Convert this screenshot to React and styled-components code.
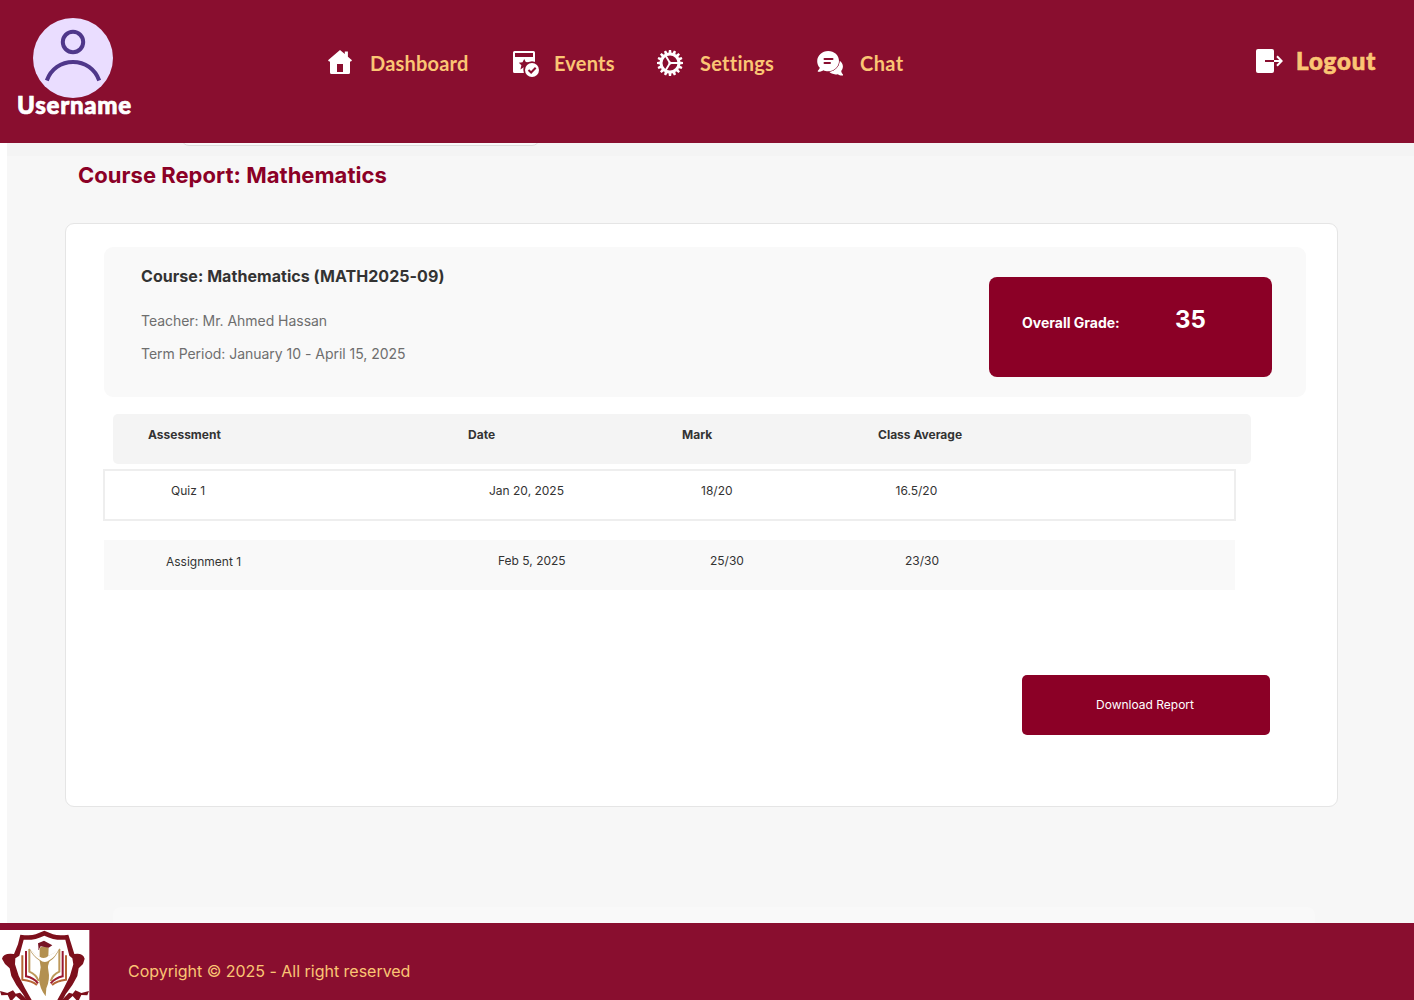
import React from "react";
import styled, { createGlobalStyle } from "styled-components";

const GlobalStyle = createGlobalStyle`
  * { box-sizing: border-box; }
  body { margin: 0; background: #fff; font-family: Inter, "Liberation Sans", sans-serif; }
`;

const Page = styled.div`
  display: flex;
  flex-direction: column;
  width: 1414px;
  height: 1000px;
  overflow: hidden;
`;

const Header = styled.header`
  display: flex;
  flex: none;
  height: 143px;
  background: #890e2f;
  font-family: Lato, "Open Sans", sans-serif;
`;

const Profile = styled.div`
  display: flex;
  flex-direction: column;
  width: 328px;
  padding: 18px 0 0 17px;
`;

const AvatarIcon = styled.svg`
  width: 80px;
  height: 80px;
  margin-left: 16px;
`;

const Username = styled.div`
  margin-top: -7px;
  font-size: 24px;
  line-height: 28px;
  font-weight: 900;
  letter-spacing: 0.75px;
  -webkit-text-stroke: 0.7px #fff;
  color: #fff;
`;

const Nav = styled.nav`
  display: flex;
  flex: 1;
  padding-top: 48px;
`;

const NavItem = styled.a`
  display: flex;
  align-items: center;
  flex: none;
  width: ${(p) => p.$width}px;
  height: 30px;
  gap: ${(p) => p.$gap}px;
  font-size: 20px;
  line-height: 30px;
  font-weight: 700;
  letter-spacing: ${(p) => p.$spacing}px;
  font-variant-ligatures: none;
  color: #fbc574;
`;

const Icon = styled.svg`
  flex: none;
  width: ${(p) => p.$w}px;
  height: ${(p) => p.$h}px;
`;

const Logout = styled.a`
  display: flex;
  align-items: center;
  width: 158px;
  height: 30px;
  margin-top: 46px;
  gap: 13px;
  font-size: 24px;
  line-height: 30px;
  font-weight: 900;
  letter-spacing: 0.9px;
  -webkit-text-stroke: 0.7px #fbc574;
  color: #fbc574;
`;

const Main = styled.main`
  display: flex;
  flex-direction: column;
  height: 780px;
  margin-left: 7px;
  background: #f7f7f7;
`;

const TopStrip = styled.div`
  display: flex;
  align-items: flex-start;
  flex: none;
  height: 13px;
  padding-left: 174px;
  overflow: hidden;
  background: #f4f4f4;
`;

const FieldEdge = styled.div`
  width: 359px;
  height: 20px;
  margin-top: -17px;
  border: 1px solid #dcdcdc;
  border-radius: 8px;
  background: #f9f9f9;
`;

const PageTitle = styled.h1`
  margin: 4px 0 0 71px;
  font-size: 22px;
  line-height: 31px;
  font-weight: 700;
  letter-spacing: 0.03px;
  color: #8b0026;
`;

const Card = styled.section`
  display: flex;
  flex-direction: column;
  flex: none;
  width: 1273px;
  height: 584px;
  margin: 32px 0 0 58px;
  padding: 23px 0 0 38px;
  border: 1px solid #e5e5e5;
  border-radius: 9px;
  background: #fff;
`;

const Summary = styled.div`
  display: flex;
  justify-content: space-between;
  flex: none;
  width: 1202px;
  height: 150px;
  padding: 0 34px 0 37px;
  border-radius: 9px;
  background: #f9f9f9;
`;

const CourseInfo = styled.div`
  display: flex;
  flex-direction: column;
  padding-top: 17px;
`;

const CourseName = styled.h2`
  margin: 0 0 21px;
  font-size: 16px;
  line-height: 24px;
  font-weight: 700;
  letter-spacing: 0.05px;
  color: #333;
`;

const CourseDetail = styled.div`
  height: 33px;
  font-size: 14px;
  line-height: 24px;
  letter-spacing: -0.03px;
  color: #6e6e6e;
`;

const Grade = styled.div`
  display: flex;
  width: 283px;
  height: 100px;
  margin-top: 30px;
  padding: 28px 0 0 33px;
  border-radius: 8px;
  background: #8b0026;
  color: #fff;
  font-weight: 700;
`;

const GradeLabel = styled.div`
  width: 153px;
  padding-top: 3px;
  font-size: 14px;
  line-height: 30px;
`;

const GradeValue = styled.div`
  font-size: 24px;
  line-height: 30px;
`;

const TableHead = styled.div`
  display: grid;
  grid-template-columns: 320px 214px 196px 1fr;
  flex: none;
  width: 1138px;
  height: 50px;
  margin: 17px 0 0 9px;
  padding: 11px 0 0 35px;
  border-radius: 5px;
  background: #f4f4f4;
  font-size: 12px;
  line-height: 20px;
  font-weight: 700;
  color: #333;
`;

const TableRow = styled.div`
  display: grid;
  grid-template-columns: ${(p) => p.$columns};
  flex: none;
  width: ${(p) => (p.$outlined ? 1133 : 1131)}px;
  height: ${(p) => (p.$outlined ? 52 : 50)}px;
  margin: ${(p) => (p.$outlined ? "5px 0 0 -1px" : "19px 0 0")};
  padding: ${(p) => (p.$outlined ? 10 : 11)}px 0 0 ${(p) => p.$inset}px;
  border: ${(p) => (p.$outlined ? "2px solid #eee" : "0")};
  background: ${(p) => (p.$outlined ? "#fff" : "#f9f9f9")};
  font-size: 12px;
  line-height: 20px;
  color: #333;
`;

const Cell = styled.div`
  padding-top: ${(p) => p.$drop || 0}px;
`;

const DownloadButton = styled.button`
  flex: none;
  width: 247.5px;
  height: 60px;
  margin: 85px 0 0 918px;
  padding: 0 1.5px 0 0;
  border: 0;
  border-radius: 5px;
  background: #8b0026;
  color: #fff;
  font: 400 12px/20px Inter, sans-serif;
`;

const NextPanel = styled.div`
  flex: none;
  width: 1202px;
  height: 16px;
  margin: auto 0 0 106px;
  border-radius: 8px 8px 0 0;
  background: #f9f9f9;
`;

const Footer = styled.footer`
  display: flex;
  flex: none;
  height: 77px;
  padding-top: 7px;
  background: #890e2f;
`;

const Copyright = styled.div`
  margin: 29px 0 0 38px;
  font-size: 16px;
  line-height: 24px;
  letter-spacing: -0.02px;
  color: #fbc574;
`;

const HomeIcon = () => (
  <Icon $w={24} $h={26} viewBox="0 1 24 26">
    <path fill="#fff" d="M12 1 16.8 5.1V2.4h3.1v5.4L24 11.3l-1 1.3h-1V23.5q0 1.500-1.500 1.500h-17Q2 25 2 23.500V12.600H1L0 11.300zM9 15v8h6v-8z" fillRule="evenodd" />
  </Icon>
);

const EventsIcon = () => (
  <Icon $w={27} $h={28} viewBox="0 1 27 28">
    <path fill="#fff" fillRule="evenodd" d="M1.500 3h19Q22 3 22 4.500V25H1.500Q0 25 0 23.500V4.500Q0 3 1.500 3zM2 5v4h18V5z" />
    <path fill="#890e2f" d="m11.200 11 1.600 3.100 3.800.4-2.800 2.500.8 3.800-3.400-1.800-3.800 2.500 1-4.200-2.600-2.600 3.700-.5z" />
    <circle cx="19" cy="22" r="8.700" fill="#890e2f" />
    <circle cx="19" cy="22" r="7" fill="#fff" />
    <path fill="none" stroke="#890e2f" strokeWidth="2" d="m15.500 22 2.600 2.500 4.600-4.800" />
  </Icon>
);

const SettingsIcon = () => (
  <Icon $w={26} $h={26} viewBox="-13 -13 26 26">
    <circle r="9" fill="none" stroke="#fff" strokeWidth="3" />
    {Array.from({ length: 16 }, (_, i) => (
      <path key={i} fill="#fff" d="M-1.600-9.500-1.100-13h2.200l.5 3.500z" transform={`rotate(${i * 22.5})`} />
    ))}
    <path fill="none" stroke="#fff" strokeWidth="1.900" d="M0 0h8M0 0l-4.500-7.500M0 0l-4.500 7.500" />
    <circle r="1.600" fill="#fff" />
  </Icon>
);

const ChatIcon = () => (
  <Icon $w={26} $h={26} viewBox="0 0 26 26">
    <path fill="#fff" d="M22.500 10.800C25 12.300 26.300 14.800 25.800 17.500c-.2 1.500-.9 2.700-1.600 3.500.2 1.500.9 2.700 1.800 3.600v.9c-2.300.2-4-.4-5.200-1.300-3.700.7-7-.4-8.800-2.600 6-.6 10.400-4.800 10.500-10.800z" />
    <path fill="#fff" stroke="#890e2f" strokeWidth="1" paintOrder="stroke" d="M11.200 1c6 0 10.800 4.300 10.800 10s-4.800 10.300-10.800 10.300c-2 0-3.500-.3-4.900-1C4.600 21.500 2.800 22 .8 21.700v-1c1-.7 1.800-1.800 2-2.900C1.100 16 .2 13.800.2 11.200.2 5.500 5.200 1 11.200 1z" />
    <path stroke="#890e2f" strokeWidth="2" strokeLinecap="round" d="M7.500 9h8M7.500 13h5.500" />
  </Icon>
);

const LogoutIcon = () => (
  <Icon $w={27} $h={24} viewBox="0 0 27 24">
    <path fill="#fff" d="M2 0h14q2 0 2 2v20q0 2-2 2H2q-2 0-2-2V2q0-2 2-2z" />
    <path stroke="#890e2f" strokeWidth="2" d="M9 12h9" />
    <path fill="none" stroke="#fff" strokeWidth="2" d="M18 12h7.500M21 7.300l4.700 4.700-4.700 4.700" />
  </Icon>
);

const SchoolLogo = () => (
  <Icon $w={90} $h={70} viewBox="0 45 270 210">
    <path fill="#fff" d="M0 45h268v210H0z" />
    <g fill="#7d101c">
      <path
        fillRule="evenodd"
        d="M133 47 159 58Q177 63 205 59L214 88 223 117Q249 113 254 131L249 147 236 160 232 183Q219 211 197 238L188 255H172Q194 216 210 182L220 148 217 130 208 122 196 74Q164 77 133 62Q102 77 71 74L58 122 46 130 45 148 56 182Q73 218 95 255H79L69 238Q47 211 34 183L29 160 15 147 6 131Q10 113 42 117L54 88 61 59Q91 63 107 58z"
      />
      <path d="M0 228 22 234 39 226 47 236 60 233 82 255H62L48 243 37 255H30L23 240 4 241zM267 228 244 234 226 226 218 236 207 233 186 255H205L218 243 229 255H237L244 240 262 241z" />
    </g>
    <g fill="none" strokeWidth="6">
      <path stroke="#b56535" d="M67 121v73q30 3 44 16M198 121v73q-28 3-42 16" />
      <path stroke="#9b1930" d="M78 108v76q24 5 36 21M188 108v76q-22 5-36 21" />
      <path stroke="#bd995b" d="M88 102v68q20 8 28 28M178 102v68q-19 8-26 28" />
    </g>
    <path fill="#b39050" d="M87 99Q104 120 119 126L119 98Q132 91 146 98L145 123Q164 116 180 99Q165 131 149 139Q142 151 145 166Q151 194 139 220L137 244Q118 218 117 191L122 157 119 137Q98 125 87 99z" />
    <path fill="#fff" d="M89 100Q103 119 119 125Q133 134 146 122Q164 115 178 100Q165 128 149 135Q134 147 119 134Q100 124 89 100z" />
    <path fill="#771423" d="M114 85 132 77 157 91 146 98 122 94 118 101z" />
    <path fill="none" stroke="#771423" strokeWidth="2" d="M116 85v20" />
  </Icon>
);

const navItems = [
  { label: "Dashboard", icon: HomeIcon, width: 185, gap: 18, spacing: 0.2 },
  { label: "Events", icon: EventsIcon, width: 144, gap: 14, spacing: 0.2 },
  { label: "Settings", icon: SettingsIcon, width: 160, gap: 17, spacing: 0.25 },
  { label: "Chat", icon: ChatIcon, width: 120, gap: 17, spacing: 0.4 },
];

const rows = [
  { outlined: true, inset: 66, columns: "318px 212px 194.5px 1fr", drop: 0, cells: ["Quiz 1", "Jan 20, 2025", "18/20", "16.5/20"] },
  { outlined: false, inset: 62, columns: "332px 212px 195px 1fr", drop: 1, cells: ["Assignment 1", "Feb 5, 2025", "25/30", "23/30"] },
];

export default function App() {
  return (
    <Page>
      <GlobalStyle />
      <Header>
        <Profile>
          <AvatarIcon viewBox="0 0 80 80">
            <circle cx="40" cy="40" r="40" fill="#eaddff" />
            <g fill="none" stroke="#4f378a" strokeWidth="4">
              <circle cx="40" cy="24" r="10.200" />
              <path d="M13.800 62.500C18 51 28 44 40 44s22 7 26.200 18.500" />
            </g>
          </AvatarIcon>
          <Username>Username</Username>
        </Profile>
        <Nav>
          {navItems.map(({ label, icon: Glyph, width, gap, spacing }) => (
            <NavItem key={label} $width={width} $gap={gap} $spacing={spacing}>
              <Glyph />
              <span>{label}</span>
            </NavItem>
          ))}
        </Nav>
        <Logout>
          <LogoutIcon />
          <span>Logout</span>
        </Logout>
      </Header>
      <Main>
        <TopStrip>
          <FieldEdge />
        </TopStrip>
        <PageTitle>Course Report: Mathematics</PageTitle>
        <Card>
          <Summary>
            <CourseInfo>
              <CourseName>Course: Mathematics (MATH2025-09)</CourseName>
              <CourseDetail>Teacher: Mr. Ahmed Hassan</CourseDetail>
              <CourseDetail>Term Period: January 10 - April 15, 2025</CourseDetail>
            </CourseInfo>
            <Grade>
              <GradeLabel>Overall Grade:</GradeLabel>
              <GradeValue>35</GradeValue>
            </Grade>
          </Summary>
          <TableHead>
            <Cell>Assessment</Cell>
            <Cell>Date</Cell>
            <Cell>Mark</Cell>
            <Cell>Class Average</Cell>
          </TableHead>
          {rows.map((row) => (
            <TableRow key={row.cells[0]} $outlined={row.outlined} $inset={row.inset} $columns={row.columns}>
              {row.cells.map((cell, i) => (
                <Cell key={cell} $drop={i === 0 ? row.drop : 0}>{cell}</Cell>
              ))}
            </TableRow>
          ))}
          <DownloadButton>Download Report</DownloadButton>
        </Card>
        <NextPanel />
      </Main>
      <Footer>
        <SchoolLogo />
        <Copyright>Copyright © 2025 - All right reserved</Copyright>
      </Footer>
    </Page>
  );
}
